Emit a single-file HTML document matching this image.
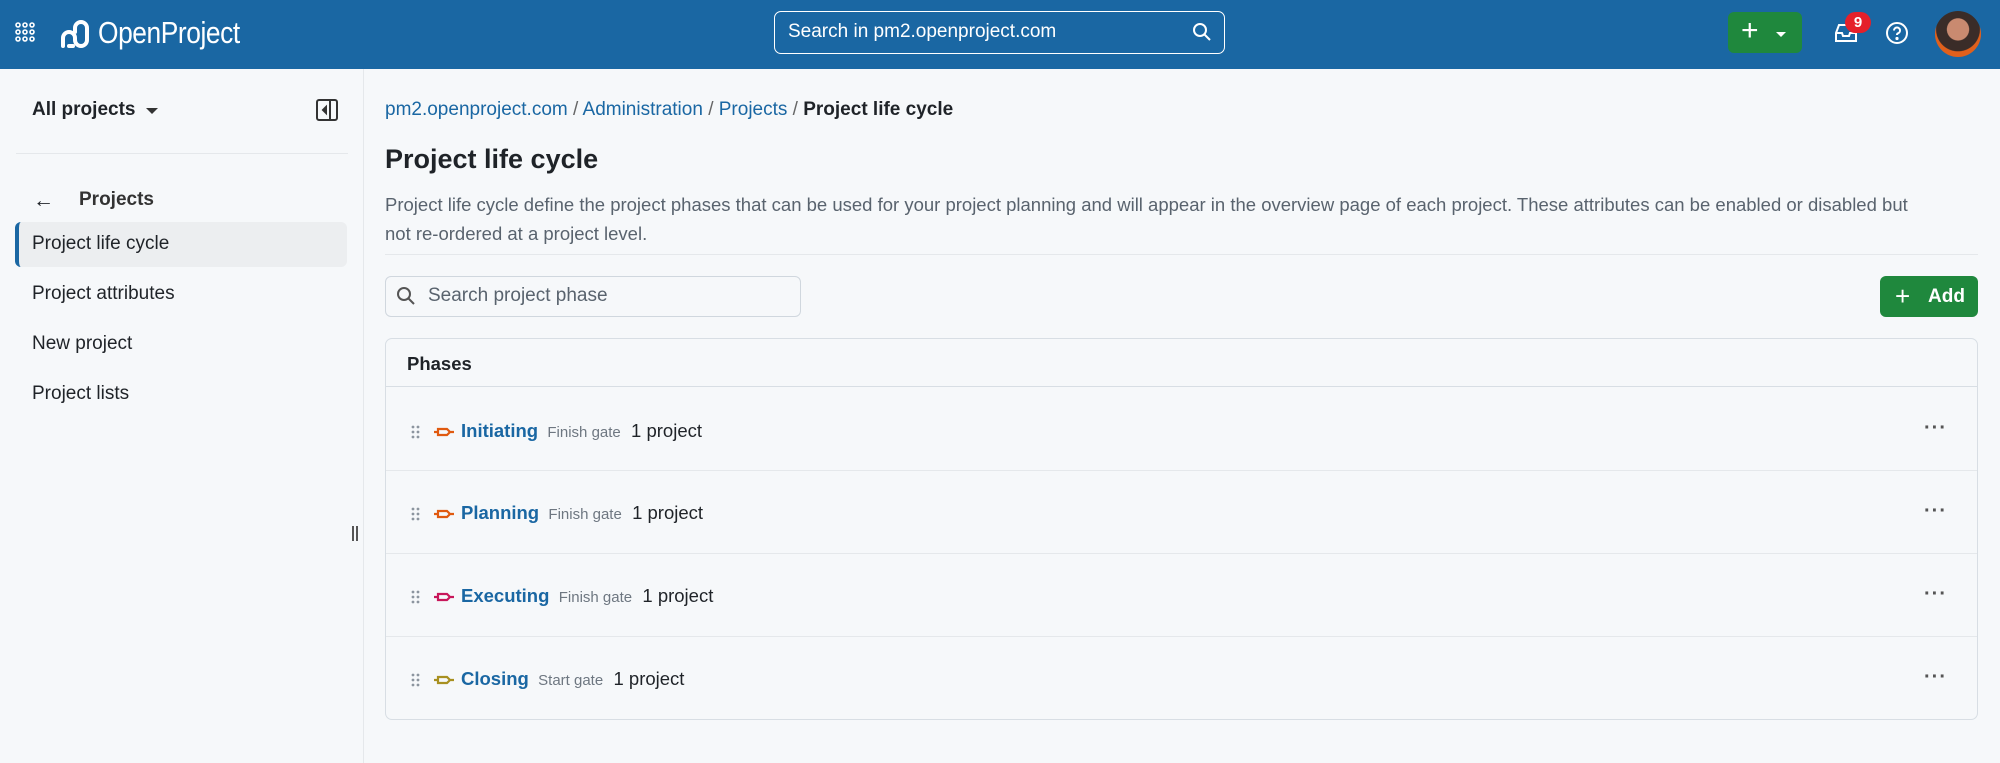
<!DOCTYPE html>
<html><head><meta charset="utf-8"><style>
*{box-sizing:border-box;margin:0;padding:0}
body{width:2000px;height:763px;overflow:hidden;background:#f6f8fa;font-family:"Liberation Sans",sans-serif;color:#1f2328;position:relative}
.hdr{position:absolute;left:0;top:0;width:2000px;height:69px;background:#1a67a3}
.abs{position:absolute}
.side{position:absolute;left:0;top:69px;width:364px;height:694px;border-right:1px solid #e5e8eb;background:#f6f8fa}
.t{position:absolute;white-space:nowrap}
a{color:#1a67a3;text-decoration:none}
.row{position:absolute;left:386px;width:1591px;height:83px;border-top:1px solid #e5e8eb}
.ph{display:inline-block;vertical-align:middle;margin-right:6px}
</style></head><body>
<div class="hdr">
 <svg class="abs" style="left:15px;top:22px" width="20" height="20" viewBox="0 0 20 20" fill="none" stroke="#fff" stroke-width="1.6"><circle cx="3" cy="3" r="2"/><circle cx="10" cy="3" r="2"/><circle cx="17" cy="3" r="2"/><circle cx="3" cy="10" r="2"/><circle cx="10" cy="10" r="2"/><circle cx="17" cy="10" r="2"/><circle cx="3" cy="17" r="2"/><circle cx="10" cy="17" r="2"/><circle cx="17" cy="17" r="2"/></svg>
 <svg class="abs" style="left:59px;top:18px" width="32" height="32" viewBox="0 0 32 32" fill="none" stroke="#fff" stroke-width="4" stroke-linecap="round"><path d="M4 28V20a6 6 0 0 1 12 0v2a6 6 0 0 0 12 0V10a6 6 0 0 0-12 0v4"/><path d="M10 28h4"/></svg>
 <div class="t" style="left:98px;top:15px;color:#fff;font-size:31px;letter-spacing:-0.5px;transform:scaleX(0.85);transform-origin:left">OpenProject</div>
 <div class="abs" style="left:774px;top:11px;width:451px;height:43px;border:1.5px solid #fff;border-radius:7px"></div>
 <div class="t" style="left:788px;top:21px;color:#fff;font-size:19px">Search in pm2.openproject.com</div>
 <svg class="abs" style="left:1192px;top:22px" width="20" height="20" viewBox="0 0 20 20" fill="none" stroke="#fff" stroke-width="2"><circle cx="8" cy="8" r="6"/><path d="M12.5 12.5L18 18"/></svg>
 <div class="abs" style="left:1728px;top:12px;width:74px;height:41px;background:#1f883d;border-radius:6px"></div>
 <div class="t" style="left:1741px;top:14px;color:#fff;font-size:30px">+</div>
 <div class="abs" style="left:1776px;top:32px;border-left:5px solid transparent;border-right:5px solid transparent;border-top:5px solid #fff"></div>
 <svg class="abs" style="left:1834px;top:22px" width="24" height="22" viewBox="0 0 24 22" fill="none" stroke="#fff" stroke-width="2"><path d="M2 11l3-8h14l3 8v8H2z"/><path d="M2 11h6l1 3h6l1-3h6"/></svg>
 <div class="abs" style="left:1845px;top:12px;width:26px;height:21px;background:#e5202a;border-radius:11px;color:#fff;font-size:15px;font-weight:bold;text-align:center;line-height:21px">9</div>
 <svg class="abs" style="left:1885px;top:21px" width="24" height="24" viewBox="0 0 24 24" fill="none" stroke="#fff" stroke-width="2"><circle cx="12" cy="12" r="10"/><path d="M9 9.5a3 3 0 1 1 4 2.8c-.7.3-1 .9-1 1.7"/><circle cx="12" cy="17.5" r=".6" fill="#fff"/></svg>
 <div class="abs" style="left:1935px;top:11px;width:46px;height:46px;border-radius:50%;background:radial-gradient(circle at 50% 40%,#c98a70 0 30%,#3a2c28 32% 60%,#e0601c 62%)"></div>
</div>
<div class="side">
 <div class="t" style="left:32px;top:30px;font-size:19px;font-weight:bold">All projects</div>
 <div class="abs" style="left:146px;top:39px;border-left:6px solid transparent;border-right:6px solid transparent;border-top:6px solid #333"></div>
 <svg class="abs" style="left:316px;top:30px" width="22" height="22" viewBox="0 0 22 22" fill="none" stroke="#333" stroke-width="2"><rect x="1" y="1" width="20" height="20" rx="2"/><path d="M14 1v20"/><path d="M10 8l-3 3 3 3z" fill="#333"/></svg>
 <div class="abs" style="left:16px;top:84px;width:332px;height:1px;background:#e5e8eb"></div>
 <div class="t" style="left:33px;top:120px;font-size:21px">←</div>
 <div class="t" style="left:79px;top:120px;font-size:19px;font-weight:bold;color:#333">Projects</div>
 <div class="abs" style="left:15px;top:153px;width:332px;height:45px;background:#eceef0;border-radius:6px;border-left:4px solid #1a67a3"></div>
 <div class="t" style="left:32px;top:164px;font-size:19px">Project life cycle</div>
 <div class="t" style="left:32px;top:214px;font-size:19px">Project attributes</div>
 <div class="t" style="left:32px;top:264px;font-size:19px">New project</div>
 <div class="t" style="left:32px;top:314px;font-size:19px">Project lists</div>
 <div class="abs" style="left:352px;top:457px;width:2px;height:15px;background:#555;box-shadow:4px 0 0 #555"></div>
</div>
<div class="t" style="left:385px;top:99px;font-size:19px"><a>pm2.openproject.com</a> <span style="color:#666">/</span> <a>Administration</a> <span style="color:#666">/</span> <a>Projects</a> <span style="color:#666">/</span> <b>Project life cycle</b></div>
<div class="t" style="left:385px;top:144px;font-size:27px;font-weight:bold">Project life cycle</div>
<div class="t" style="left:385px;top:190px;font-size:18.5px;color:#59636e;white-space:normal;width:1550px;line-height:29px">Project life cycle define the project phases that can be used for your project planning and will appear in the overview page of each project. These attributes can be enabled or disabled but not&nbsp;re&#8209;ordered at a project level.</div>
<div class="abs" style="left:385px;top:254px;width:1593px;height:1px;background:#e5e8eb"></div>
<div class="abs" style="left:385px;top:276px;width:416px;height:41px;border:1px solid #d0d7de;border-radius:6px;background:#f6f8fa"></div>
<svg class="abs" style="left:396px;top:286px" width="20" height="20" viewBox="0 0 20 20" fill="none" stroke="#555" stroke-width="2"><circle cx="8" cy="8" r="6"/><path d="M12.5 12.5L18 18"/></svg>
<div class="t" style="left:428px;top:285px;font-size:19px;color:#59636e">Search project phase</div>
<div class="abs" style="left:1880px;top:276px;width:98px;height:41px;background:#1f883d;border-radius:6px"></div>
<div class="t" style="left:1895px;top:281px;font-size:26px;color:#fff">+</div>
<div class="t" style="left:1928px;top:286px;font-size:19px;color:#fff;font-weight:bold">Add</div>
<div class="abs" style="left:385px;top:338px;width:1593px;height:382px;border:1px solid #d8dee4;border-radius:7px"></div>
<div class="t" style="left:407px;top:353px;font-size:18.5px;font-weight:bold">Phases</div>
<div class="abs" style="left:386px;top:386px;width:1591px;height:1px;background:#d8dee4"></div>

<div class="row" style="top:387px;border-top:none"></div>
<div class="row" style="top:470px"></div>
<div class="row" style="top:553px"></div>
<div class="row" style="top:636px"></div>

<svg width="0" height="0" style="position:absolute"><defs>
<g id="dots" fill="#8c959f"><circle cx="2" cy="2" r="1.4"/><circle cx="7" cy="2" r="1.4"/><circle cx="2" cy="7" r="1.4"/><circle cx="7" cy="7" r="1.4"/><circle cx="2" cy="12" r="1.4"/><circle cx="7" cy="12" r="1.4"/></g>
<path id="gate" d="M1 7h4M5 4h9l3 3-3 3H5zM17 7h4" fill="none" stroke-width="2.2"/>
</defs></svg>

<div class="t" style="left:411px;top:419px;font-size:18.5px;line-height:24px"><svg class="ph" width="9" height="14" style="margin-right:13px"><use href="#dots"/></svg><svg class="ph" width="22" height="14" stroke="#e05a10"><use href="#gate"/></svg><a style="font-weight:bold">Initiating</a> <span style="font-size:15px;color:#6e7781">&nbsp;Finish gate</span>&nbsp; 1 project</div>
<div class="t" style="left:411px;top:501px;font-size:18.5px;line-height:24px"><svg class="ph" width="9" height="14" style="margin-right:13px"><use href="#dots"/></svg><svg class="ph" width="22" height="14" stroke="#e05a10"><use href="#gate"/></svg><a style="font-weight:bold">Planning</a> <span style="font-size:15px;color:#6e7781">&nbsp;Finish gate</span>&nbsp; 1 project</div>
<div class="t" style="left:411px;top:584px;font-size:18.5px;line-height:24px"><svg class="ph" width="9" height="14" style="margin-right:13px"><use href="#dots"/></svg><svg class="ph" width="22" height="14" stroke="#c8175a"><use href="#gate"/></svg><a style="font-weight:bold">Executing</a> <span style="font-size:15px;color:#6e7781">&nbsp;Finish gate</span>&nbsp; 1 project</div>
<div class="t" style="left:411px;top:667px;font-size:18.5px;line-height:24px"><svg class="ph" width="9" height="14" style="margin-right:13px"><use href="#dots"/></svg><svg class="ph" width="22" height="14" stroke="#a89020"><use href="#gate"/></svg><a style="font-weight:bold">Closing</a> <span style="font-size:15px;color:#6e7781">&nbsp;Start gate</span>&nbsp; 1 project</div>

<div class="t" style="left:1924px;top:417px;font-size:20px;color:#555;letter-spacing:1px;font-weight:bold">···</div>
<div class="t" style="left:1924px;top:500px;font-size:20px;color:#555;letter-spacing:1px;font-weight:bold">···</div>
<div class="t" style="left:1924px;top:583px;font-size:20px;color:#555;letter-spacing:1px;font-weight:bold">···</div>
<div class="t" style="left:1924px;top:666px;font-size:20px;color:#555;letter-spacing:1px;font-weight:bold">···</div>
</body></html>
